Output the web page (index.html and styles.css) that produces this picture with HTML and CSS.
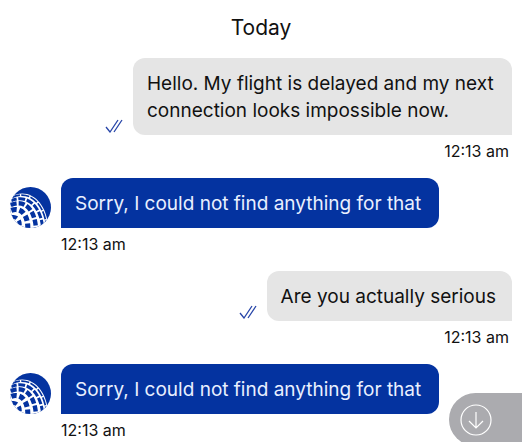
FILE: index.html
```html
<!DOCTYPE html>
<html lang="en">
<head>
    <meta charset="UTF-8">
    <meta name="viewport" content="width=device-width, initial-scale=1">
    <title>Chat</title>
    <link rel="stylesheet" href="styles.css">
</head>
<body>
    <!-- shared icons -->
    <svg class="sprite" aria-hidden="true">
        <symbol id="globe" viewBox="0 0 120 120">
            <clipPath id="disc"><circle cx="60" cy="60" r="60"/></clipPath>
            <g clip-path="url(#disc)">
                <rect width="120" height="120" fill="#0433a0"/>
                <path d="M0 30C52 -2 108 40 112 120H0Z" fill="#fff"/>
                <g fill="none" stroke="#0433a0">
                    <path d="M6 31C54 6 100 46 107 116" stroke-width="5" stroke-dasharray="24 4"/>
                    <path d="M4 40C50 20 90 54 96 122" stroke-width="9" stroke-dasharray="20 5" stroke-dashoffset="4"/>
                    <path d="M2 53C42 34 74 66 76 124" stroke-width="13" stroke-dasharray="18 6"/>
                    <path d="M0 70C30 56 54 80 52 124" stroke-width="15" stroke-dasharray="16 8" stroke-dashoffset="-4"/>
                    <path d="M2 90C16 82 32 96 28 116" stroke-width="12" stroke-dasharray="14 9" stroke-dashoffset="-5"/>
                </g>
            </g>
        </symbol>
        <symbol id="ticks" viewBox="0 0 18 14">
            <path d="M1 8L5 13L13 1M9 13L17 1" fill="none" stroke="#2745a8" stroke-width="1.3"/>
        </symbol>
    </svg>

    <main class="chat">
        <h1 class="day">Today</h1>

        <div class="message sent">
            <div class="row">
                <svg class="ticks" role="img" aria-label="Read"><use href="#ticks"/></svg>
                <p class="bubble">Hello. My flight is delayed and my next connection looks impossible now.</p>
            </div>
            <time class="time">12:13 am</time>
        </div>

        <div class="message received">
            <div class="row">
                <svg class="avatar" role="img" aria-label="Agent"><use href="#globe"/></svg>
                <p class="bubble">Sorry, I could not find anything for that</p>
            </div>
            <time class="time">12:13 am</time>
        </div>

        <div class="message sent">
            <div class="row">
                <svg class="ticks" role="img" aria-label="Read"><use href="#ticks"/></svg>
                <p class="bubble">Are you actually serious</p>
            </div>
            <time class="time">12:13 am</time>
        </div>

        <div class="message received">
            <div class="row">
                <svg class="avatar" role="img" aria-label="Agent"><use href="#globe"/></svg>
                <p class="bubble">Sorry, I could not find anything for that</p>
            </div>
            <time class="time">12:13 am</time>
        </div>
    </main>

    <button class="scroll-down" type="button" aria-label="Scroll to latest">
        <svg viewBox="0 0 32 32" width="32" height="32" fill="none" stroke="#fff" stroke-width="1.2">
            <circle cx="16" cy="16" r="15"/>
            <path d="M16 8V24M9 17L16 24L23 17"/>
        </svg>
    </button>
</body>
</html>
```
FILE: styles.css
```css
body {
    margin: 0;
    background: #fff;
    color: #111;
    font-family: Inter, "Liberation Sans", sans-serif;
}

.sprite {
    position: absolute;
    width: 0;
    height: 0;
}

.chat {
    padding: 14px 10px 0;
}

.day {
    margin: 0 0 16px;
    font-size: 21px;
    font-weight: 400;
    line-height: 28px;
    text-align: center;
}

.message {
    display: flex;
    flex-direction: column;
    margin-bottom: 16px;
}

.message:last-child {
    margin-bottom: 0;
}

.row {
    display: flex;
    align-items: flex-end;
    gap: 10px;
}

.bubble {
    margin: 0;
    padding: 12px 16px 11px 14px;
    border-radius: 12px;
    font-size: 19px;
    line-height: 27px;
}

.sent {
    align-items: flex-end;
}

.sent .bubble {
    max-width: 349px;
    background: #e5e5e5;
    border-bottom-right-radius: 0;
}

.received .bubble {
    padding-right: 18px;
    background: #0433a0;
    color: #e9f0ff;
    border-bottom-left-radius: 0;
}

.ticks {
    width: 18px;
    height: 14px;
    margin-bottom: 2px;
}

.avatar {
    flex: none;
    width: 41px;
    height: 41px;
}

.time {
    padding: 6px 3px 0;
    font-size: 16px;
    line-height: 21px;
}

.received .time {
    padding-left: 51px;
}

.scroll-down {
    position: fixed;
    right: 0;
    bottom: -4px;
    display: flex;
    align-items: center;
    width: 73px;
    height: 53px;
    padding: 0 11px;
    border: 0;
    border-radius: 27px 0 0 27px;
    background: #ababaf;
    cursor: pointer;
}
```
